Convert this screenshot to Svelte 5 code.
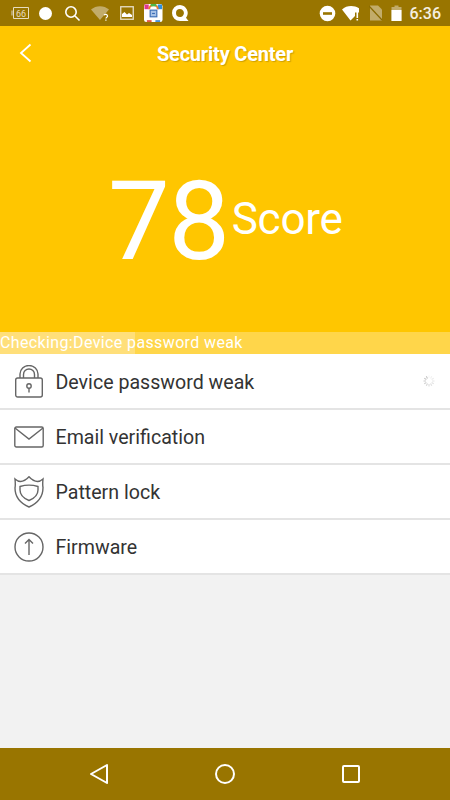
<script lang="ts">
  const rows = [
    { id: 'lock', label: 'Device password weak', busy: true },
    { id: 'mail', label: 'Email verification', busy: false },
    { id: 'shield', label: 'Pattern lock', busy: false },
    { id: 'up', label: 'Firmware', busy: false }
  ];
  const spokes = Array.from({ length: 12 }, (_, i) => i);
</script>

<div class="phone">
  <div class="statusbar">
    <div class="status-left">
      <svg width="18" height="14" viewBox="0 0 18 14">
        <path d="M2.500 1.500h15v11h-15z" fill="none" stroke="#e6dcc0" stroke-width="1" />
        <path d="M0 4.500h2v5H0z" fill="#b9a465" />
        <text x="10" y="10.500" text-anchor="middle" class="bat-num">66</text>
      </svg>
      <span class="dot"></span>
      <svg width="17" height="17" viewBox="0 0 17 17" class="i-search">
        <circle cx="7" cy="7" r="5.200" fill="none" stroke="#fff" stroke-width="1.600" />
        <path d="M11 11l4.500 4.500" stroke="#fff" stroke-width="1.600" />
      </svg>
      <svg width="19" height="16" viewBox="0 0 19 16">
        <path d="M0 4.500C5 0 13 0 18 4.500L9 15z" fill="#c2ac6a" />
        <path d="M13 10.200a2 2 0 0 1 3.600.8c0 1.200-1.700 1.300-1.700 2.600M14.900 14.400v1.400" fill="none" stroke="#fff" stroke-width="1.200" />
      </svg>
      <svg width="14" height="14" viewBox="0 0 14 14">
        <rect x="0.750" y="0.750" width="12.500" height="12.500" fill="none" stroke="#e8dfc8" stroke-width="1.300" />
        <path d="M2 11V8l2.500-2 2.500 2.500 2-1.500 3 2v2z" fill="#fff" />
      </svg>
      <svg width="19" height="20" viewBox="0 0 20 20">
        <rect x="0" y="0.500" width="19.500" height="19" rx="2.500" fill="#fff" />
        <path d="M0.500 1h4.500v5H0.500z" fill="#e0388c" />
        <path d="M14.500 1h4.500v5h-4.500z" fill="#2d8fe0" />
        <path d="M4.500 6a5.500 5.500 0 0 1 11 0h-2a3.500 3.500 0 0 0-7 0z" fill="#f07a2a" />
        <path d="M7 0.500h6v2.500H7z" fill="#4cb848" />
        <rect x="6.500" y="7" width="7" height="7" fill="#a9c3e6" stroke="#3a6db5" stroke-width="1.200" />
        <path d="M8.500 10.500h3" stroke="#3a6db5" stroke-width="1.200" />
        <path d="M3 17.500h5v2H3z" fill="#e2574c" />
        <path d="M12 17.500h5v2h-5z" fill="#4a90d9" />
      </svg>
      <svg width="18" height="18" viewBox="0 0 18 18" class="i-q">
        <path d="M9 1a8 8 0 1 0 0 16h8.500L15 13.800A8 8 0 0 0 9 1z" fill="#fff" />
        <path d="M9 5a4 4 0 1 0 0 8c1 0 1.500-.2 2.400-.8l1-1.200A4 4 0 0 0 9 5z" fill="#997500" />
      </svg>
    </div>
    <div class="status-right">
      <svg width="17" height="17" viewBox="0 0 17 17" class="i-dnd">
        <circle cx="8.500" cy="8.500" r="7.800" fill="#fff" />
        <rect x="4" y="7.200" width="9" height="2.600" fill="#997500" />
      </svg>
      <svg width="19" height="16" viewBox="0 0 19 16">
        <path d="M0 4.500C4.500 0 12 0 17 3.200V7.500l-4 0v3.500L8.500 15.500z" fill="#fff" />
        <path d="M14.500 7h1.600v6h-1.600zM14.500 14h1.600v1.600h-1.600z" fill="#fff" />
      </svg>
      <svg width="14" height="16" viewBox="0 0 14 16">
        <path d="M1 0.500h8l4 4v11H1z" fill="#c2ac6a" />
        <path d="M0 1l13 14" stroke="#8a6a00" stroke-width="1.200" />
      </svg>
      <svg width="11" height="16" viewBox="0 0 11 16">
        <path d="M3.500 0.500h4v1.500H10.500v14H0.500V2h3z" fill="#c2ac6a" />
        <path d="M0.500 5h10v11h-10z" fill="#fff" />
      </svg>
      <span class="clock">6:36</span>
    </div>
  </div>

  <header class="hero">
    <div class="titlebar">
      <svg class="back" width="14" height="20" viewBox="0 0 14 20">
        <path d="M12.500 1.500L3 10l9.500 8.500" fill="none" stroke="#fff" stroke-width="1.800" />
      </svg>
      <h1>Security Center</h1>
    </div>
    <div class="score">
      <span class="num">78</span>
      <span class="unit">Score</span>
    </div>
  </header>

  <div class="checking">
    <div class="progress" style="width: 30%"></div>
    <span>Checking:Device password weak</span>
  </div>

  <ul class="list">
    {#each rows as row}
      <li>
        <span class="ico">
          {#if row.id === 'lock'}
            <svg width="30" height="33" viewBox="0 0 30 33" fill="none" stroke="#666" stroke-width="1.400">
              <path d="M6 13V9a9 8.500 0 0 1 18 0v4" />
              <path d="M9.500 13V9.500a5.500 5.500 0 0 1 11 0V13" />
              <rect x="1.700" y="13" width="26.600" height="19" rx="2" />
              <circle cx="15" cy="21" r="2.200" />
              <path d="M15 23.200v4.300" />
            </svg>
          {:else if row.id === 'mail'}
            <svg width="30" height="22" viewBox="0 0 30 22" fill="none" stroke="#666" stroke-width="1.400">
              <rect x="0.800" y="1" width="28.400" height="20" rx="1.500" />
              <path d="M1 2l14 11L29 2" />
            </svg>
          {:else if row.id === 'shield'}
            <svg width="30" height="32" viewBox="0 0 30 32" fill="none" stroke="#666" stroke-width="1.400">
              <path d="M1 3c2 1.800 3.500 2.500 5.500 2.500C9 5.500 12 4 15 .8c3 3.200 6 4.700 8.500 4.700 2 0 3.500-.7 5.500-2.500-.3 3-.5 6 0 8.500C29 21 23 27.500 15 31 7 27.500 1 21 1 12 1.500 9.500 1.300 6 1 3z" />
              <path d="M6 10.500c6-1.800 12-1.800 18 0v3.500c0 5-4 8.500-9 10.500-5-2-9-5.500-9-10.500z" />
            </svg>
          {:else}
            <svg width="30" height="30" viewBox="0 0 30 30" fill="none" stroke="#666" stroke-width="1.400">
              <circle cx="15" cy="15" r="14" />
              <path d="M15 23V7.500M11 11.500l4-4 4 4" />
            </svg>
          {/if}
        </span>
        <span class="label">{row.label}</span>
        {#if row.busy}
          <svg class="spin" width="12" height="12" viewBox="0 0 12 12">
            {#each spokes as s}
              <line x1="6" y1="0.500" x2="6" y2="3" stroke="#888" stroke-width="1" opacity={0.08 + s * 0.04} transform="rotate({s * 30} 6 6)" />
            {/each}
          </svg>
        {/if}
      </li>
    {/each}
  </ul>

  <div class="filler"></div>

  <nav class="navbar">
    <svg width="20" height="22" viewBox="0 0 20 22">
      <path d="M18 2L2 11l16 9z" fill="none" stroke="#fff" stroke-width="2" stroke-linejoin="round" />
    </svg>
    <svg width="22" height="22" viewBox="0 0 22 22">
      <circle cx="11" cy="11" r="9" fill="none" stroke="#fff" stroke-width="2" />
    </svg>
    <svg width="20" height="20" viewBox="0 0 20 20">
      <rect x="2" y="2" width="16" height="16" rx="1" fill="none" stroke="#fff" stroke-width="2" />
    </svg>
  </nav>
</div>

<style>
  :global(body) {
    margin: 0;
    background: #f2f2f2;
  }

  .phone {
    width: 450px;
    height: 800px;
    display: flex;
    flex-direction: column;
    font-family: Roboto, "Liberation Sans", sans-serif;
    overflow: hidden;
  }

  .statusbar {
    height: 26px;
    flex: none;
    background: #997500;
    display: flex;
    align-items: center;
    justify-content: space-between;
    padding: 0 9px 0 11px;
    color: #fff;
  }

  .status-left,
  .status-right {
    display: flex;
    align-items: center;
  }

  .status-left {
    gap: 10px;
  }

  .status-right {
    gap: 8px;
  }

  .i-search {
    margin-left: 2px;
  }

  .i-q {
    margin-left: -2px;
  }

  .i-dnd {
    margin-right: -2px;
  }

  .bat-num {
    font-family: Roboto, sans-serif;
    font-size: 9px;
    fill: #e6dcc0;
  }

  .dot {
    width: 13px;
    height: 13px;
    border-radius: 50%;
    background: #fff;
  }

  .clock {
    font-size: 16px;
    font-weight: 500;
    color: #f5efe0;
  }

  .hero {
    height: 306px;
    flex: none;
    background: #ffc600;
    display: flex;
    flex-direction: column;
  }

  .titlebar {
    height: 56px;
    position: relative;
    display: flex;
    align-items: center;
    justify-content: center;
  }

  .back {
    position: absolute;
    left: 18px;
    top: 17px;
  }

  h1 {
    margin: 0;
    font-size: 20px;
    font-weight: 700;
    letter-spacing: -0.2px;
    color: #fff;
    text-shadow: 1px 1px 1px rgba(120, 90, 0, 0.35);
  }

  .score {
    display: flex;
    align-items: center;
    padding: 75px 0 0 108px;
    color: #fff;
  }

  .num {
    font-size: 110px;
    line-height: 130px;
    font-weight: 400;
    letter-spacing: -1.500px;
  }

  .unit {
    font-size: 44px;
    font-weight: 400;
    letter-spacing: -0.200px;
    margin: -6px 0 0 3px;
  }

  .checking {
    height: 22px;
    flex: none;
    position: relative;
    background: #ffd64a;
    color: #fff;
    font-size: 16px;
    line-height: 22px;
    letter-spacing: 0.37px;
    white-space: nowrap;
  }

  .progress {
    position: absolute;
    left: 0;
    top: 0;
    bottom: 0;
    background: #ffdf7a;
  }

  .checking span {
    position: relative;
  }

  .list {
    list-style: none;
    margin: 0;
    padding: 1px 0 0;
    background: #fff;
    flex: none;
  }

  li {
    height: 53px;
    border-bottom: 2px solid #e4e4e4;
    display: flex;
    align-items: center;
    padding: 0 15px 0 14px;
  }

  .ico {
    width: 30px;
    height: 34px;
    display: flex;
    align-items: center;
    justify-content: center;
  }

  .label {
    margin-left: 11.500px;
    flex: 1;
    font-size: 19.600px;
    color: #333;
    position: relative;
    top: 1px;
  }

  .spin {
    margin: -2px 0 0;
  }

  .filler {
    flex: 1;
    background: #f2f2f2;
  }

  .navbar {
    height: 52px;
    flex: none;
    background: #997500;
    display: flex;
    align-items: center;
    justify-content: space-between;
    padding: 0 89px;
  }
</style>
